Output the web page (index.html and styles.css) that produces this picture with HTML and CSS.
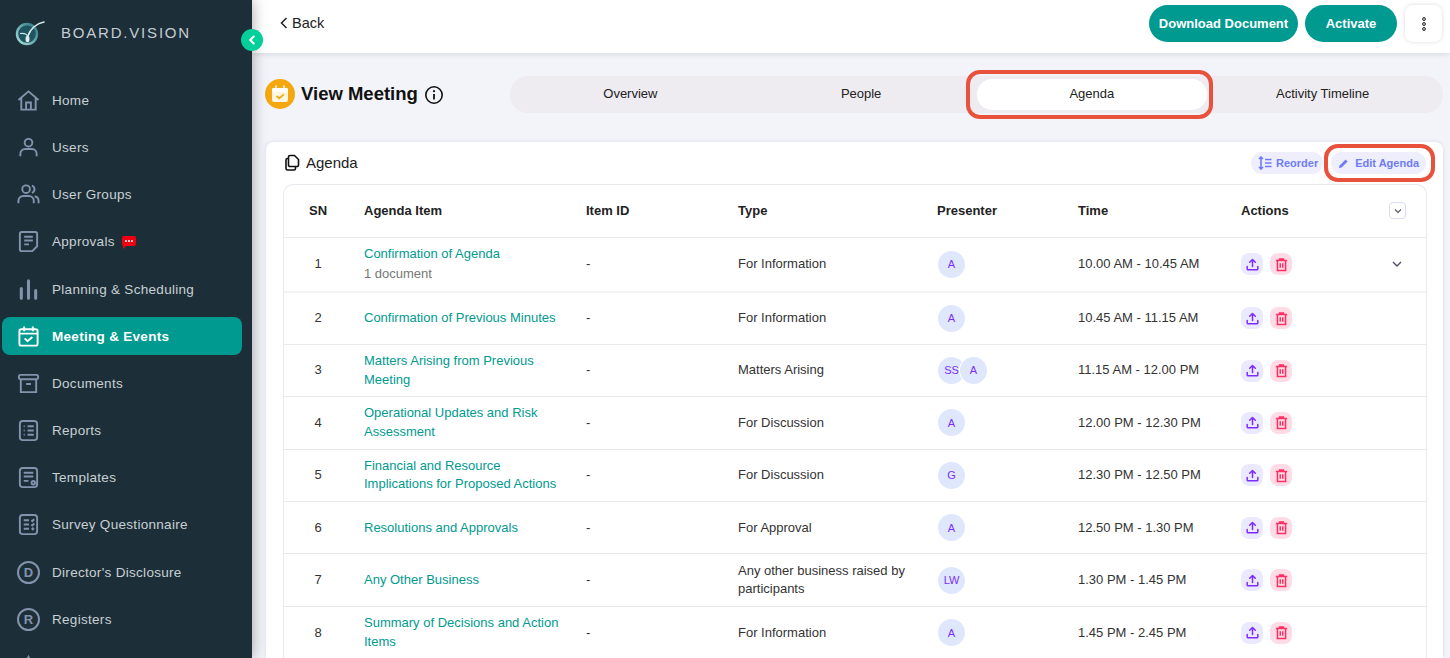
FILE: index.html
```html
<!DOCTYPE html>
<html lang="en">
<head>
  <meta charset="UTF-8">
  <title>View Meeting - Board.Vision</title>
  <link rel="stylesheet" href="styles.css">
</head>
<body>
  <svg class="defs" width="0" height="0">
    <symbol id="upload" viewBox="0 0 24 24"><path d="M12 15V4M7.500 8.500 12 4l4.500 4.500M3.500 15v4a1.500 1.500 0 0 0 1.500 1.500h14a1.500 1.500 0 0 0 1.500-1.500v-4" fill="none" stroke="currentColor" stroke-width="2.400" stroke-linecap="round" stroke-linejoin="round"/></symbol>
    <symbol id="trash" viewBox="0 0 24 24"><path d="M3 5.500h18M9 5.500V3h6v2.500M5.500 5.500h13V21.500h-13zM10 10v7M14 10v7" fill="none" stroke="currentColor" stroke-width="2.400"/></symbol>
  </svg>

  <aside class="sidebar">
    <div class="brand">
      <svg class="brand-logo" width="30" height="30" viewBox="0 0 30 30">
        <defs>
          <linearGradient id="logoRing" x1="1" y1="0" x2="0" y2="1"><stop offset="0" stop-color="#2a7480"/><stop offset="1" stop-color="#a8e0dc"/></linearGradient>
        </defs>
        <circle cx="12" cy="16" r="10" fill="#1f5560" stroke="url(#logoRing)" stroke-width="2.400"/>
        <path d="M29 4C22 5 15 11 13 18" fill="none" stroke="#dfeeee" stroke-width="1.500" stroke-linecap="round"/>
        <path d="M5 15.500c3-.5 6 0 8 2.500" fill="none" stroke="#cfe8e8" stroke-width="1.200"/>
        <ellipse cx="12.500" cy="21" rx="2" ry="3.200" fill="#dfeeee"/>
      </svg>
      <span class="brand-name">BOARD.VISION</span>
    </div>
    <button class="collapse" aria-label="Collapse">
      <svg width="10" height="10" viewBox="0 0 10 10"><path d="M6.800 1.500 3.200 5l3.600 3.500" fill="none" stroke="#fff" stroke-width="2" stroke-linecap="round" stroke-linejoin="round"/></svg>
    </button>

    <nav class="nav">
      <a class="nav-item">
        <svg class="nav-icon" viewBox="0 0 24 24"><path d="M1.500 11.500 12 2.500l10.500 9M4.500 9v12.500h15V9M9.500 21.500V14h5v7.500"/></svg>
        Home
      </a>
      <a class="nav-item">
        <svg class="nav-icon" viewBox="0 0 24 24"><circle cx="12" cy="7" r="4"/><path d="M3.500 21v-2.500a5 5 0 0 1 5-5h7a5 5 0 0 1 5 5V21"/></svg>
        Users
      </a>
      <a class="nav-item">
        <svg class="nav-icon" viewBox="0 0 24 24"><circle cx="9.500" cy="6.500" r="4"/><path d="M1.500 21v-2.500a5 5 0 0 1 5-5h6a5 5 0 0 1 5 5V21M15.500 2.700a4 4 0 0 1 0 7.600M18.500 13.800a5 5 0 0 1 4 4.700V21"/></svg>
        User Groups
      </a>
      <a class="nav-item">
        <svg class="nav-icon" viewBox="0 0 24 24"><path d="M5 2h14a2 2 0 0 1 2 2v13l-5 5H5a2 2 0 0 1-2-2V4a2 2 0 0 1 2-2zM7.500 7h9M7.500 11h9M7.500 15h5"/></svg>
        Approvals
        <span class="nav-badge"><i></i><i></i><i></i></span>
      </a>
      <a class="nav-item">
        <svg class="nav-icon bars" viewBox="0 0 24 24"><path d="M4.500 11v10M12 3v18M19.500 13v8"/></svg>
        Planning &amp; Scheduling
      </a>
      <a class="nav-item active">
        <svg class="nav-icon" viewBox="0 0 24 24"><rect x="2.500" y="4.500" width="19" height="17" rx="2"/><path d="M7.500 1.500v5M16.500 1.500v5M2.500 9h19M8 14l3 3 5-4.500"/></svg>
        Meeting &amp; Events
      </a>
      <a class="nav-item">
        <svg class="nav-icon" viewBox="0 0 24 24"><rect x="2" y="3" width="20" height="4.500" rx="1.500"/><path d="M4 7.500V21h16V7.500M9.500 12.500h5"/></svg>
        Documents
      </a>
      <a class="nav-item">
        <svg class="nav-icon" viewBox="0 0 24 24"><rect x="3" y="2" width="18" height="20" rx="3"/><path d="M7 7.500h1M11 7.500h6.500M7 12h1M11 12h6.500M7 16.500h1M11 16.500h6.500"/></svg>
        Reports
      </a>
      <a class="nav-item">
        <svg class="nav-icon" viewBox="0 0 24 24"><rect x="3" y="2" width="18" height="20" rx="3"/><path d="M7 7h10M7 11h10M7 15.500h5"/><circle cx="17" cy="17.500" r="1.800"/></svg>
        Templates
      </a>
      <a class="nav-item">
        <svg class="nav-icon" viewBox="0 0 24 24"><rect x="3" y="2" width="18" height="20" rx="3"/><path d="M7 7.500h5.500M7 12h5.500M7 16.500h5.500M15 7.500l1 1 2-2M15 12l1 1 2-2M15.500 15.500l2 2M17.500 15.500l-2 2"/></svg>
        Survey Questionnaire
      </a>
      <a class="nav-item">
        <span class="nav-letter">D</span>
        Director's Disclosure
      </a>
      <a class="nav-item">
        <span class="nav-letter">R</span>
        Registers
      </a>
      <a class="nav-item">
        <svg class="nav-icon" viewBox="0 0 24 24"><path d="M12 2 22 21H2z"/></svg>
      </a>
    </nav>
  </aside>

  <main class="main">
    <header class="topbar">
      <a class="back">
        <svg width="9" height="12" viewBox="0 0 9 12"><path d="M7.500 1 2.500 6l5 5" fill="none" stroke="#222" stroke-width="1.500"/></svg>
        Back
      </a>
      <div class="top-actions">
        <button class="btn-primary">Download Document</button>
        <button class="btn-primary activate">Activate</button>
        <button class="btn-more" aria-label="More"><i></i><i></i><i></i></button>
      </div>
    </header>

    <section class="page-head">
      <div class="page-title">
        <span class="title-icon">
          <svg width="18" height="18" viewBox="0 0 18 18"><rect x="1" y="3" width="16" height="14" rx="2" fill="#fff6e0"/><rect x="1" y="3" width="16" height="4" rx="1.500" fill="#fff"/><path d="M5 .5v4M13 .5v4" stroke="#fff" stroke-width="1.500"/><path d="M5.500 11l2.800 2.300 4.500-4" fill="none" stroke="#f5a70f" stroke-width="1.700"/></svg>
        </span>
        <h1>View Meeting</h1>
        <svg class="info" width="20" height="20" viewBox="0 0 20 20"><circle cx="10" cy="10" r="8.200" fill="none" stroke="#111" stroke-width="1.600"/><path d="M10 9v5.500" stroke="#111" stroke-width="1.800"/><circle cx="10" cy="6.200" r="1.100" fill="#111"/></svg>
      </div>
      <div class="tabs">
        <div class="tab">Overview</div>
        <div class="tab">People</div>
        <div class="tab active">Agenda</div>
        <div class="tab">Activity Timeline</div>
      </div>
    </section>

    <section class="card">
      <div class="card-head">
        <div class="card-title">
          <svg width="17" height="17" viewBox="0 0 17 17"><path d="M6 1.500h4.500L14.500 5.500V11a1.500 1.500 0 0 1-1.500 1.500H6A1.500 1.500 0 0 1 4.500 11V3A1.500 1.500 0 0 1 6 1.500zM4.500 4.500H3.500A1.500 1.500 0 0 0 2 6v8.500A1.500 1.500 0 0 0 3.500 16H10a1.500 1.500 0 0 0 1.500-1.500v-2" fill="none" stroke="#111" stroke-width="1.600"/></svg>
          Agenda
        </div>
        <div class="card-actions">
          <button class="btn-soft">
            <svg width="14" height="14" viewBox="0 0 14 14"><path d="M3 1v12M1 3l2-2 2 2M1 11l2 2 2-2M7 3.500h6.500M7 7h6.500M7 10.500h6.500" fill="none" stroke="#6f7cf7" stroke-width="1.600"/></svg>
            Reorder
          </button>
          <button class="btn-soft marked">
            <svg width="11" height="11" viewBox="0 0 11 11"><path d="M1 10l.6-2.600L7.600 1.400l2 2-6 6z" fill="#6f7cf7"/></svg>
            Edit Agenda
          </button>
        </div>
      </div>

      <div class="table-wrap">
        <table class="agenda">
          <colgroup>
            <col class="c-sn"><col class="c-item"><col class="c-id"><col class="c-type"><col class="c-pres"><col class="c-time"><col class="c-act"><col class="c-more">
          </colgroup>
          <thead>
            <tr>
              <th class="sn">SN</th><th>Agenda Item</th><th>Item ID</th><th>Type</th><th>Presenter</th><th>Time</th><th>Actions</th>
              <th class="more"><span class="chev-box"><svg width="10" height="10" viewBox="0 0 10 10"><path d="M2 3.500 5 6.500l3-3" fill="none" stroke="#555" stroke-width="1.100"/></svg></span></th>
            </tr>
          </thead>
          <tbody>
            <tr class="first">
              <td class="sn">1</td>
              <td><a class="item-link">Confirmation of Agenda</a><div class="doc-count">1 document</div></td>
              <td>-</td><td>For Information</td>
              <td><div class="avatars"><span class="avatar">A</span></div></td>
              <td>10.00 AM - 10.45 AM</td>
              <td><div class="row-actions"><span class="act up"><svg><use href="#upload"/></svg></span><span class="act del"><svg><use href="#trash"/></svg></span></div></td>
              <td class="more"><svg class="row-chev" width="12" height="12" viewBox="0 0 12 12"><path d="M2 4l4 4 4-4" fill="none" stroke="#4a5068" stroke-width="1.400"/></svg></td>
            </tr>
            <tr>
              <td class="sn">2</td>
              <td><a class="item-link">Confirmation of Previous Minutes</a></td>
              <td>-</td><td>For Information</td>
              <td><div class="avatars"><span class="avatar">A</span></div></td>
              <td>10.45 AM - 11.15 AM</td>
              <td><div class="row-actions"><span class="act up"><svg><use href="#upload"/></svg></span><span class="act del"><svg><use href="#trash"/></svg></span></div></td>
              <td></td>
            </tr>
            <tr>
              <td class="sn">3</td>
              <td><a class="item-link">Matters Arising from Previous Meeting</a></td>
              <td>-</td><td>Matters Arising</td>
              <td><div class="avatars"><span class="avatar">SS</span><span class="avatar">A</span></div></td>
              <td>11.15 AM - 12.00 PM</td>
              <td><div class="row-actions"><span class="act up"><svg><use href="#upload"/></svg></span><span class="act del"><svg><use href="#trash"/></svg></span></div></td>
              <td></td>
            </tr>
            <tr>
              <td class="sn">4</td>
              <td><a class="item-link">Operational Updates and Risk Assessment</a></td>
              <td>-</td><td>For Discussion</td>
              <td><div class="avatars"><span class="avatar">A</span></div></td>
              <td>12.00 PM - 12.30 PM</td>
              <td><div class="row-actions"><span class="act up"><svg><use href="#upload"/></svg></span><span class="act del"><svg><use href="#trash"/></svg></span></div></td>
              <td></td>
            </tr>
            <tr>
              <td class="sn">5</td>
              <td><a class="item-link">Financial and Resource Implications for Proposed Actions</a></td>
              <td>-</td><td>For Discussion</td>
              <td><div class="avatars"><span class="avatar">G</span></div></td>
              <td>12.30 PM - 12.50 PM</td>
              <td><div class="row-actions"><span class="act up"><svg><use href="#upload"/></svg></span><span class="act del"><svg><use href="#trash"/></svg></span></div></td>
              <td></td>
            </tr>
            <tr>
              <td class="sn">6</td>
              <td><a class="item-link">Resolutions and Approvals</a></td>
              <td>-</td><td>For Approval</td>
              <td><div class="avatars"><span class="avatar">A</span></div></td>
              <td>12.50 PM - 1.30 PM</td>
              <td><div class="row-actions"><span class="act up"><svg><use href="#upload"/></svg></span><span class="act del"><svg><use href="#trash"/></svg></span></div></td>
              <td></td>
            </tr>
            <tr>
              <td class="sn">7</td>
              <td><a class="item-link">Any Other Business</a></td>
              <td>-</td><td>Any other business raised by participants</td>
              <td><div class="avatars"><span class="avatar">LW</span></div></td>
              <td>1.30 PM - 1.45 PM</td>
              <td><div class="row-actions"><span class="act up"><svg><use href="#upload"/></svg></span><span class="act del"><svg><use href="#trash"/></svg></span></div></td>
              <td></td>
            </tr>
            <tr>
              <td class="sn">8</td>
              <td><a class="item-link">Summary of Decisions and Action Items</a></td>
              <td>-</td><td>For Information</td>
              <td><div class="avatars"><span class="avatar">A</span></div></td>
              <td>1.45 PM - 2.45 PM</td>
              <td><div class="row-actions"><span class="act up"><svg><use href="#upload"/></svg></span><span class="act del"><svg><use href="#trash"/></svg></span></div></td>
              <td></td>
            </tr>
          </tbody>
        </table>
      </div>
    </section>
  </main>
</body>
</html>
```

FILE: styles.css
```css
* {
  box-sizing: border-box;
}

html, body {
  height: 100%;
}

body {
  margin: 0;
  display: flex;
  overflow: hidden;
  background: #f2f4f9;
  font-family: "Liberation Sans", Arial, sans-serif;
  color: #222;
}

.defs {
  position: absolute;
}

button {
  border: none;
  font-family: inherit;
  cursor: pointer;
}

/* sidebar */
.sidebar {
  position: relative;
  z-index: 2;
  flex: 0 0 252px;
  padding: 0 10px 0 2px;
  background: #1c2f38;
  box-shadow: 0 0 14px rgba(0,0,0,0.35);
}

.brand {
  height: 81.380px;
  padding: 18px 0 0 13px;
  display: flex;
  align-items: flex-start;
  gap: 16px;
}

.brand-name {
  margin-top: 6px;
  font-size: 15px;
  letter-spacing: 1.800px;
  color: #c6ccd2;
}

.collapse {
  position: absolute;
  top: 29px;
  right: -11px;
  width: 22px;
  height: 22px;
  padding: 0;
  display: flex;
  align-items: center;
  justify-content: center;
  border-radius: 50%;
  background: #03cf9b;
}

.nav {
  display: flex;
  flex-direction: column;
  gap: 9.180px;
}

.nav-item {
  flex: 0 0 38px;
  height: 38px;
  padding-left: 15px;
  display: flex;
  align-items: center;
  gap: 12px;
  border-radius: 8px;
  font-size: 13.500px;
  letter-spacing: 0.300px;
  color: #c9cfd4;
}

.nav-item.active {
  background: #009a90;
  color: #fff;
  font-weight: bold;
}

.nav-icon {
  flex: 0 0 23px;
  width: 23px;
  height: 23px;
  fill: none;
  stroke: #8492ad;
  stroke-width: 2;
}

.nav-icon.bars {
  stroke-width: 3.200;
  stroke-linecap: round;
}

.active .nav-icon {
  stroke: #fff;
}

.nav-letter {
  flex: 0 0 23px;
  width: 23px;
  height: 23px;
  display: flex;
  align-items: center;
  justify-content: center;
  border: 2px solid #8492ad;
  border-radius: 50%;
  font-size: 13px;
  font-weight: bold;
  letter-spacing: 0;
  color: #8492ad;
}

.nav-badge {
  position: relative;
  width: 14px;
  height: 10px;
  margin: -2px 0 0 -5px;
  display: inline-flex;
  align-items: center;
  justify-content: center;
  gap: 1px;
  border-radius: 2px;
  background: #f00010;
}

.nav-badge::after {
  content: "";
  position: absolute;
  left: 1px;
  bottom: -3px;
  border-top: 3px solid #f00010;
  border-right: 3px solid transparent;
}

.nav-badge i {
  width: 2px;
  height: 2px;
  border-radius: 50%;
  background: #fff;
}

/* main */
.main {
  flex: 1;
  min-width: 0;
  display: flex;
  flex-direction: column;
}

.topbar {
  flex: 0 0 53px;
  padding: 5px 8px 0 27px;
  display: flex;
  justify-content: space-between;
  align-items: flex-start;
  background: #fff;
  box-shadow: 0 1px 6px rgba(0,0,0,0.12);
}

.back {
  margin-top: 10px;
  display: flex;
  align-items: center;
  gap: 4px;
  font-size: 14.500px;
  color: #222;
}

.top-actions {
  display: flex;
  gap: 7px;
  align-items: center;
}

.btn-primary {
  height: 37px;
  width: 149px;
  border-radius: 19px;
  background: #009a90;
  color: #fff;
  font-size: 13px;
  font-weight: 700;
}

.btn-primary.activate {
  width: 92px;
}

.btn-more {
  width: 37px;
  height: 37px;
  margin-left: 1px;
  display: flex;
  flex-direction: column;
  align-items: center;
  justify-content: center;
  gap: 1px;
  border-radius: 8px;
  background: #fff;
  box-shadow: 0 0 4px rgba(0,0,0,0.15);
}

.btn-more i {
  width: 4px;
  height: 4px;
  border: 1px solid #444;
  border-radius: 50%;
  background: #aaa;
}

.page-head {
  height: 89px;
  padding: 23px 7px 0 13px;
  display: flex;
  align-items: flex-start;
}

.page-title {
  flex: 0 0 245px;
  height: 37px;
  display: flex;
  align-items: center;
}

.title-icon {
  width: 30px;
  height: 30px;
  margin-top: -1px;
  display: flex;
  align-items: center;
  justify-content: center;
  border-radius: 50%;
  background: #f5a70f;
}

.page-title h1 {
  margin: -2px 6px 0;
  font-size: 18.500px;
  font-weight: 700;
  color: #111;
}

.tabs {
  flex: 1;
  height: 37px;
  padding: 3px 5px;
  display: grid;
  grid-template-columns: repeat(4, 1fr);
  border-radius: 18px;
  background: #eeebf1;
}

.tab {
  position: relative;
  display: flex;
  align-items: center;
  justify-content: center;
  padding-bottom: 2px;
  border-radius: 15px;
  font-size: 13px;
  color: #222;
}

.tab.active {
  background: #fff;
}

/* red markers drawn over the screenshot */
.tab.active::after {
  content: "";
  position: absolute;
  inset: -9px -6px -9px -11px;
  border: 4px solid #e8523c;
  border-radius: 14px;
}

.card {
  flex: 1;
  min-height: 0;
  margin: 0 7px 0 14px;
  padding: 0 16px 0 17px;
  background: #fff;
  border-radius: 8px 8px 0 0;
  box-shadow: 0 0 4px rgba(0,0,0,0.1);
}

.card-head {
  height: 42px;
  display: flex;
  justify-content: space-between;
  align-items: center;
}

.card-title {
  display: flex;
  align-items: center;
  gap: 5px;
  margin: -1px 0 0 1px;
  font-size: 15px;
  color: #222;
}

.card-actions {
  display: flex;
  gap: 8px;
  margin-right: 1px;
}

.btn-soft {
  height: 22px;
  padding: 0 5px 0 7px;
  display: flex;
  align-items: center;
  gap: 4px;
  border-radius: 11px;
  background: #eeeefc;
  color: #6f7cf7;
  font-size: 11px;
  font-weight: 700;
}

.btn-soft.marked {
  position: relative;
  padding: 0 7px;
  gap: 6px;
}

.btn-soft.marked::after {
  content: "";
  position: absolute;
  inset: -8px -9px -8px -7px;
  border: 4px solid #e8523c;
  border-radius: 14px;
}

.table-wrap {
  border: 1px solid #e8e8ef;
  border-bottom: none;
  border-radius: 10px 10px 0 0;
}

.agenda {
  width: 100%;
  table-layout: fixed;
  border-collapse: collapse;
  font-size: 13px;
}

.c-sn { width: 64px; }
.c-item { width: 222px; }
.c-id { width: 152px; }
.c-type { width: 199px; }
.c-pres { width: 141px; }
.c-time { width: 163px; }
.c-act { width: 156px; }

.agenda th, .agenda td {
  padding: 0 16px;
  text-align: left;
  vertical-align: middle;
  line-height: 18.500px;
}

.agenda th {
  height: 52px;
  font-size: 13px;
  font-weight: 700;
  color: #222;
}

.agenda td {
  height: 52.400px;
  padding-right: 8px;
  color: #333;
  border-top: 1px solid #e9e9f0;
}

.agenda tr.first td {
  height: 55px;
}

.agenda tr.first + tr td {
  border-top: 2px solid #f3f3f6;
}

.agenda .sn {
  padding: 0 0 0 4px;
  text-align: center;
}

.agenda .more {
  padding: 0 0 0 8px;
}

.agenda td.more {
  padding-left: 10px;
}

.row-chev {
  display: block;
}

.chev-box {
  width: 17px;
  height: 17px;
  display: flex;
  align-items: center;
  justify-content: center;
  border: 1px solid #d9dcef;
  border-radius: 4px;
}

.item-link {
  color: #009a90;
}

.doc-count {
  margin-top: 2px;
  color: #777;
}

.avatars {
  display: flex;
  margin-left: 1px;
}

.avatar {
  width: 27px;
  height: 27px;
  display: flex;
  align-items: center;
  justify-content: center;
  border-radius: 50%;
  background: #dfe7fd;
  color: #7b2ff7;
  font-size: 11px;
}

.avatar + .avatar {
  margin-left: -5px;
  box-shadow: 0 0 0 1px #fff;
}

.row-actions {
  display: flex;
  gap: 7px;
}

.act {
  width: 22px;
  height: 22px;
  display: flex;
  align-items: center;
  justify-content: center;
  border-radius: 8px;
}

.act svg {
  width: 15px;
  height: 15px;
}

.act.up {
  background: #ebe9ff;
  color: #7c2cff;
}

.act.del {
  background: #ffdce5;
  color: #ff2e63;
}
```
